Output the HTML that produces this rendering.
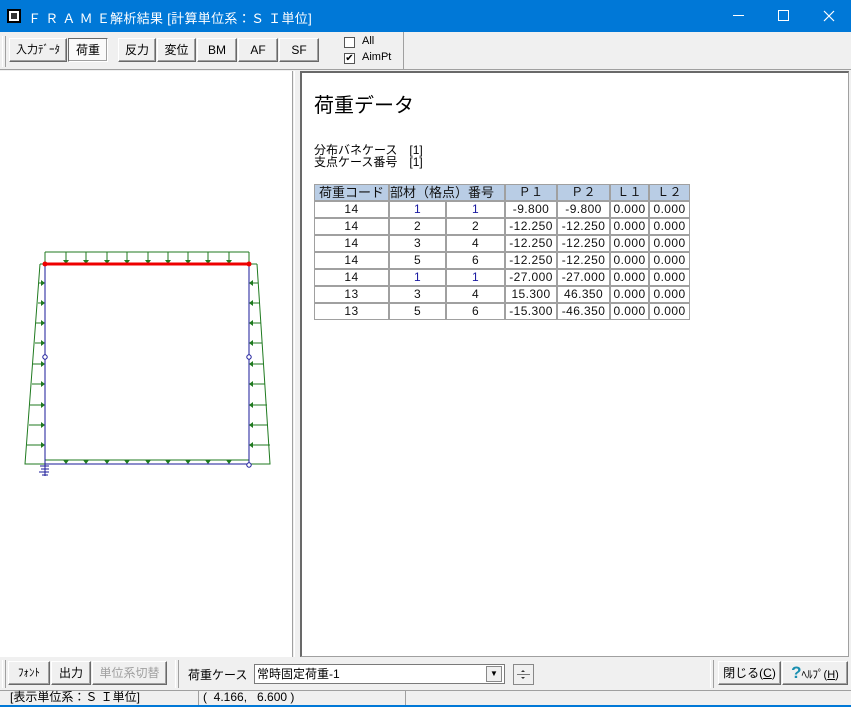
<!DOCTYPE html>
<html><head><meta charset="utf-8"><style>
*{margin:0;padding:0;box-sizing:border-box}
body{width:851px;height:707px;background:#f0f0f0;position:relative;overflow:hidden;font-family:"Liberation Sans","Noto Sans CJK JP",sans-serif;font-size:12px;color:#000}
.a{position:absolute}
.title{left:0;top:0;width:851px;height:32px;background:#0078d7;color:#fff}
.btn{position:absolute;height:24px;background:#f0f0f0;border:1px solid;border-color:#fff #696969 #696969 #fff;box-shadow:inset -1px -1px 0 #a0a0a0;font-size:12px;text-align:center;line-height:22px}
.grip{position:absolute;width:4px;border-left:1px solid #fff;border-right:1px solid #a0a0a0}
table{border-collapse:separate;border-spacing:0;font-size:12px;font-family:"Liberation Sans","Noto Sans CJK JP",sans-serif;color:#111}
td{border:1px solid #a0a0a0;height:17px;text-align:center;padding:0;line-height:15px;background:#fff;white-space:nowrap;overflow:hidden;letter-spacing:0.4px}
tr.h td{background:#b9cde5}
.b{color:#1a1aa0}
</style></head><body>
<div class="a title">
 <div class="a" style="left:7px;top:9px;width:14px;height:14px;border:2px solid #000;background:#fff"><div style="margin:2px;width:6px;height:6px;background:#333"></div></div>
 <div class="a" style="left:28px;top:8px;font-size:13px;letter-spacing:0.3px">Ｆ Ｒ Ａ Ｍ Ｅ解析結果 [計算単位系：Ｓ Ｉ単位]</div>
 <div class="a" style="left:733px;top:15px;width:11px;height:1px;background:#fff"></div>
 <div class="a" style="left:778px;top:10px;width:11px;height:11px;border:1px solid #fff"></div>
 <svg class="a" style="left:823px;top:10px" width="12" height="12"><path d="M1,1L11,11M11,1L1,11" stroke="#fff" stroke-width="1.2"/></svg>
</div>
<div class="grip" style="left:2px;top:36px;height:31px"></div>
<div class="btn" style="left:9px;top:38px;width:58px;font-size:11px">入力ﾃﾞｰﾀ</div>
<div class="btn" style="left:68px;top:38px;width:40px;background:#fafafa;border-color:#696969 #fff #fff #696969">荷重</div>
<div class="btn" style="left:118px;top:38px;width:38px">反力</div>
<div class="btn" style="left:157px;top:38px;width:39px">変位</div>
<div class="btn" style="left:197px;top:38px;width:40px">BM</div>
<div class="btn" style="left:238px;top:38px;width:40px">AF</div>
<div class="btn" style="left:279px;top:38px;width:40px">SF</div>
<div class="a" style="left:344px;top:37px;width:11px;height:11px;border:1px solid #555;background:#fff"></div>
<div class="a" style="left:362px;top:35px;font-size:11px">All</div>
<div class="a" style="left:344px;top:53px;width:11px;height:11px;border:1px solid #555;background:#fff;font-size:10px;line-height:9px;text-align:center">✔</div>
<div class="a" style="left:362px;top:51px;font-size:11px">AimPt</div>
<div class="a" style="left:403px;top:32px;width:1px;height:38px;background:#a0a0a0"></div>
<div class="a" style="left:0;top:69px;width:851px;height:1px;background:#a0a0a0"></div>
<!-- left pane -->
<div class="a" style="left:0;top:71px;width:293px;height:586px;background:#fff;border-right:1px solid #a0a0a0"></div>
<svg class="a" style="left:0;top:71px" width="293" height="586" viewBox="0 71 293 586">
<g stroke="#1f7a1f" fill="none" stroke-width="1">
<path d="M45,252 H249 M45,252 V264 M249,252 V264"/>
<path d="M66,252V264M86,252V264M107,252V264M127,252V264M148,252V264M168,252V264M188,252V264M208,252V264M229,252V264"/>
<path d="M45,460 H249 M45,460 V464 M249,460 V464"/>
<path d="M40,264 L25,464 H45 M45,264 H40"/>
<path d="M257,264 L270,464 H249 M249,264 H257"/>
<path d="M39,283H45M38,303H45M36,323H45M35,343H45M33,364H45M32,384H45M30,405H45M29,425H45M27,445H45"/>
<path d="M258,283H249M260,303H249M261,323H249M262,343H249M264,364H249M265,384H249M267,405H249M268,425H249M270,445H249"/>
</g>
<g fill="#1f7a1f">
<path d="M63,260h6l-3,4zM83,260h6l-3,4zM104,260h6l-3,4zM124,260h6l-3,4zM145,260h6l-3,4zM165,260h6l-3,4zM185,260h6l-3,4zM205,260h6l-3,4zM226,260h6l-3,4z"/>
<path d="M63,460h6l-3,4zM83,460h6l-3,4zM104,460h6l-3,4zM124,460h6l-3,4zM145,460h6l-3,4zM165,460h6l-3,4zM185,460h6l-3,4zM205,460h6l-3,4zM226,460h6l-3,4z"/>
<path d="M41,280v6l4,-3zM41,300v6l4,-3zM41,320v6l4,-3zM41,340v6l4,-3zM41,361v6l4,-3zM41,381v6l4,-3zM41,402v6l4,-3zM41,422v6l4,-3zM41,442v6l4,-3z"/>
<path d="M253,280v6l-4,-3zM253,300v6l-4,-3zM253,320v6l-4,-3zM253,340v6l-4,-3zM253,361v6l-4,-3zM253,381v6l-4,-3zM253,402v6l-4,-3zM253,422v6l-4,-3zM253,442v6l-4,-3z"/>
</g>
<path d="M45,264V464H249V264" stroke="#1a1a9a" fill="none"/>
<path d="M45,264H249" stroke="#e00" stroke-width="3"/>
<circle cx="45" cy="264" r="2.5" fill="#e00"/><circle cx="249" cy="264" r="2.5" fill="#e00"/>
<circle cx="45" cy="357" r="2.2" fill="#fff" stroke="#1a1a9a"/><circle cx="249" cy="357" r="2.2" fill="#fff" stroke="#1a1a9a"/>
<circle cx="249" cy="465" r="2.2" fill="#fff" stroke="#1a1a9a"/>
<path d="M40,466h9M41,469h8M39,472h10M42,475h6M45,464v12" stroke="#1a1a9a"/>
</svg>
<!-- splitter -->
<div class="a" style="left:294px;top:71px;width:6px;height:586px;background:#f0f0f0;border-left:1px solid #fff"></div>
<!-- right pane -->
<div class="a" style="left:300px;top:71px;width:549px;height:586px;background:#fff;border:1px solid #a0a0a0;border-left:2px solid #696969;border-top:2px solid #696969"></div>
<div class="a" style="left:314px;top:89px;font-size:20px">荷重データ</div>
<div class="a" style="left:314px;top:144px;font-size:12px;line-height:12px">分布バネケース　[1]<br>支点ケース番号　[1]</div>
<table class="a" style="left:314px;top:184px;width:376px;table-layout:fixed">
<colgroup><col style="width:75px"><col style="width:57px"><col style="width:59px"><col style="width:52px"><col style="width:53px"><col style="width:39px"><col style="width:41px"></colgroup>
<tr class="h"><td style="font-size:13px;letter-spacing:0">荷重コード</td><td colspan="2" style="text-align:left;font-size:13px;letter-spacing:0">部材（格点）番号</td><td>Ｐ１</td><td>Ｐ２</td><td>Ｌ１</td><td>Ｌ２</td></tr>
<tr><td>14</td><td class="b">1</td><td class="b">1</td><td>-9.800</td><td>-9.800</td><td>0.000</td><td>0.000</td></tr>
<tr><td>14</td><td>2</td><td>2</td><td>-12.250</td><td>-12.250</td><td>0.000</td><td>0.000</td></tr>
<tr><td>14</td><td>3</td><td>4</td><td>-12.250</td><td>-12.250</td><td>0.000</td><td>0.000</td></tr>
<tr><td>14</td><td>5</td><td>6</td><td>-12.250</td><td>-12.250</td><td>0.000</td><td>0.000</td></tr>
<tr><td>14</td><td class="b">1</td><td class="b">1</td><td>-27.000</td><td>-27.000</td><td>0.000</td><td>0.000</td></tr>
<tr><td>13</td><td>3</td><td>4</td><td>15.300</td><td>46.350</td><td>0.000</td><td>0.000</td></tr>
<tr><td>13</td><td>5</td><td>6</td><td>-15.300</td><td>-46.350</td><td>0.000</td><td>0.000</td></tr>
</table>
<!-- bottom toolbar -->
<div class="grip" style="left:2px;top:660px;height:28px"></div>
<div class="btn" style="left:8px;top:661px;width:42px;font-size:11px">ﾌｫﾝﾄ</div>
<div class="btn" style="left:51px;top:661px;width:40px">出力</div>
<div class="btn" style="left:92px;top:661px;width:75px;color:#a0a0a0">単位系切替</div>
<div class="grip" style="left:175px;top:660px;height:28px"></div>
<div class="a" style="left:188px;top:666px">荷重ケース</div>
<div class="a" style="left:254px;top:664px;width:251px;height:20px;background:#fff;border:1px solid #7a7a7a;padding-left:2px;line-height:18px">常時固定荷重-1</div>
<div class="a" style="left:486px;top:666px;width:16px;height:16px;border:1px solid #888;background:#f0f0f0;font-size:8px;text-align:center;line-height:14px">▼</div>
<div class="a" style="left:513px;top:664px;width:21px;height:21px;border:1px solid #888;background:#f0f0f0">
 <svg width="19" height="19"><path d="M9,5l-2,2h4zM9,14l-2,-2h4z" fill="#333"/><path d="M3,9.5h13" stroke="#777"/></svg>
</div>
<div class="grip" style="left:710px;top:660px;height:28px"></div>
<div class="btn" style="left:718px;top:661px;width:63px">閉じる(<u>C</u>)</div>
<div class="btn" style="left:782px;top:661px;width:66px;font-size:11px"><b style="color:#1a8fb0;font-size:17px">?</b>ﾍﾙﾌﾟ(<u>H</u>)</div>
<!-- status bar -->
<div class="a" style="left:0;top:690px;width:851px;height:1px;background:#a0a0a0"></div>
<div class="a" style="left:10px;top:691px;font-size:12px;line-height:13px">[表示単位系：Ｓ Ｉ単位]</div>
<div class="a" style="left:198px;top:691px;width:1px;height:14px;background:#a0a0a0"></div>
<div class="a" style="left:203px;top:691px;font-size:12px;line-height:13px">(&nbsp;&nbsp;4.166,&nbsp;&nbsp;&nbsp;6.600 )</div>
<div class="a" style="left:405px;top:691px;width:1px;height:14px;background:#a0a0a0"></div>
<div class="a" style="left:0;top:705px;width:851px;height:2px;background:#0078d7"></div>
</body></html>
